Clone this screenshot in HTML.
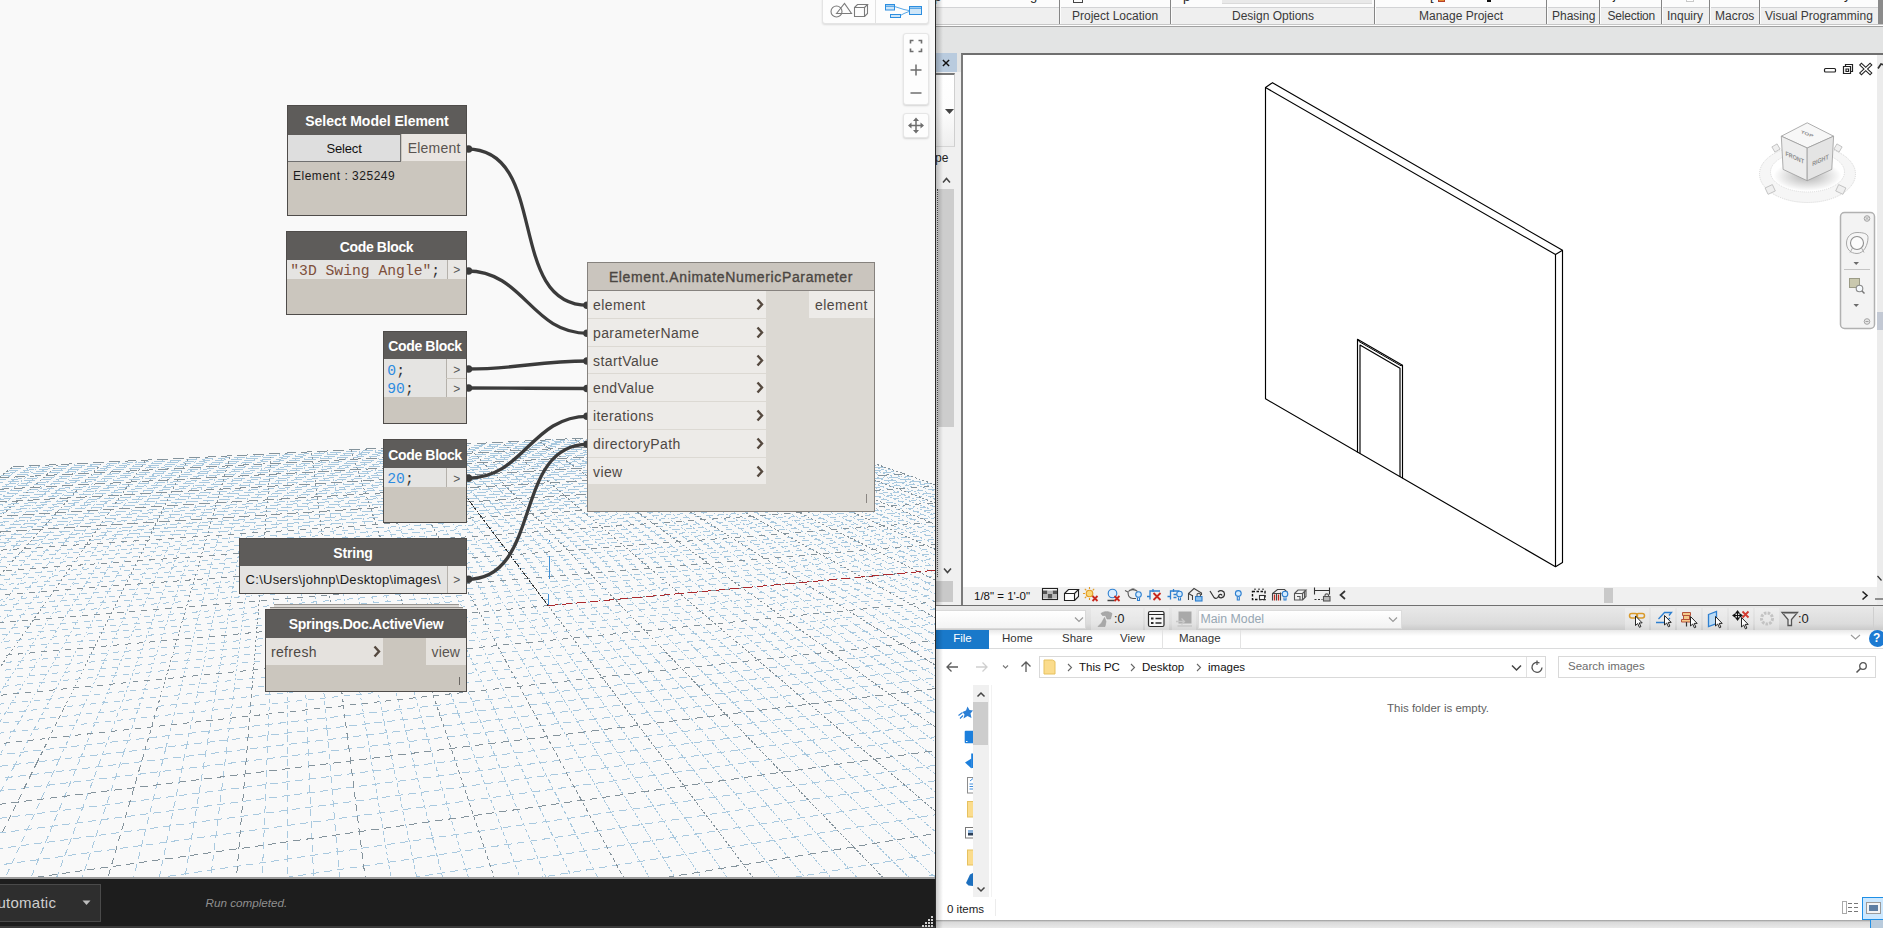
<!DOCTYPE html>
<html><head><meta charset="utf-8"><title>Dynamo - Revit</title>
<style>
*{box-sizing:border-box;margin:0;padding:0}
html,body{width:1883px;height:928px;overflow:hidden;background:#e6e6e6;font-family:"Liberation Sans",sans-serif;}
.abs{position:absolute}
#dyn{left:0;top:0;width:935px;height:878px;background:#f9f9f9;overflow:hidden}
/* nodes */
.node{position:absolute;background:#cbc6be;border:1px solid #4f4c4a;}
.hd{position:absolute;left:0;top:0;right:0;background:#5e5c5a;color:#fff;font-weight:bold;font-size:14px;text-align:center;white-space:nowrap}
.t{position:absolute;white-space:nowrap}
.code{font-family:"Liberation Mono",monospace;font-size:14.7px;margin-top:2px;margin-left:-1px}
.oport{position:absolute;letter-spacing:.3px;background:#e9e5e1;color:#595450;font-size:14px;text-align:center}
.gt{position:absolute;background:#e9e7e4;border-left:1px solid #b5b1ab;color:#555;font-size:12px;text-align:center}
.ed{position:absolute;background:#e5e4e2}
/* big node */
#big{position:absolute;left:587px;top:262px;width:288px;height:250px;background:#dcd9d3;border:1px solid #86827e}
#big .bh{position:absolute;left:0;top:0;right:0;height:28px;background:#cac5be;border-bottom:1px solid #86827e;color:#4b4642;font-size:14px;letter-spacing:.65px;-webkit-text-stroke:.35px #4b4642;text-align:center;line-height:29px;white-space:nowrap}
.ip{position:absolute;left:0;width:178px;height:26.750px;letter-spacing:.4px;background:#edebe8;color:#4d4844;font-size:14px;line-height:28px;padding-left:5px;white-space:nowrap}
.chev{position:absolute;right:2px;top:7px;width:8px;height:13px}
</style></head><body>
<div id="dyn" class="abs">
<svg class="abs" style="left:0;top:0" width="935" height="878" viewBox="0 0 935 878" shape-rendering="crispEdges">
<path d="M59964.1 -44854.2L3279.2 1299.7M-49096.1 37591.7L3131.2 1248.3M-17178.0 13462.7L2997.1 1201.7M-10321.3 8279.2L2875.1 1159.2M-5655.3 4751.9L2661.4 1084.9M-4584.0 3942.0L2567.2 1052.2M-3840.0 3379.6L2480.2 1021.9M-3293.1 2966.2L2399.6 993.9M-2543.0 2399.2L2255.0 943.6M-2274.7 2196.3L2189.9 921.0M-2052.8 2028.6L2128.9 899.8M-1866.3 1887.6L2071.8 879.9M-1570.2 1663.7L1967.5 843.6M-1450.7 1573.4L1919.7 827.1M-1345.7 1494.0L1874.7 811.4M-1252.6 1423.6L1832.0 796.5M-1095.1 1304.5L1753.2 769.2M-1027.8 1253.7L1716.8 756.5M-966.8 1207.5L1682.1 744.4M-911.1 1165.5L1649.0 732.9M-813.5 1091.7L1587.4 711.5M-770.4 1059.1L1558.7 701.5M-730.6 1029.0L1531.2 692.0M-693.6 1001.0L1504.8 682.8M-627.2 950.8L1455.3 665.6M-597.3 928.2L1432.1 657.5M-569.2 907.0L1409.7 649.7M-542.9 887.1L1388.2 642.3M-494.8 850.8L1347.6 628.1M-472.8 834.2L1328.4 621.5M-452.0 818.4L1309.9 615.0M-432.3 803.5L1292.0 608.8" stroke="#a9c9df" stroke-width="1" stroke-dasharray="8 5" fill="none"/><path d="M-396.0 776.0L1258.1 597.0M-379.1 763.3L1242.0 591.4M-363.1 751.2L1226.4 586.0M-347.8 739.6L1211.3 580.7M-319.3 718.0L1182.5 570.7M-305.9 708.0L1168.8 565.9M-293.2 698.3L1155.5 561.3M-281.0 689.1L1142.5 556.8M-258.0 671.8L1117.8 548.2M-247.3 663.6L1106.0 544.1M-236.9 655.8L1094.5 540.1M-226.9 648.2L1083.3 536.2M-208.1 634.0L1061.9 528.8M-199.1 627.2L1051.6 525.2M-190.5 620.7L1041.5 521.7M-182.2 614.5L1031.8 518.3M-166.5 602.5L1013.0 511.8M-159.0 596.9L1003.9 508.6M-151.7 591.4L995.1 505.6M-144.7 586.1L986.5 502.6M-131.3 576.0L969.9 496.8M-124.9 571.1L961.9 494.0M-118.7 566.4L954.1 491.3M-112.7 561.9L946.4 488.6" stroke="#a9c9df" stroke-width="1" stroke-dasharray="6 6" fill="none"/><path d="M-101.2 553.2L931.6 483.5M-95.7 549.0L924.5 481.0M-90.3 545.0L917.5 478.6M-85.1 541.1L910.7 476.2M-75.1 533.5L897.5 471.6M-70.3 529.9L891.0 469.4M-65.7 526.3L884.8 467.2M-61.1 522.9L878.6 465.1M-52.4 516.3L866.7 460.9M-48.1 513.1L860.9 458.9M-44.0 510.0L855.3 456.9M-40.0 507.0L849.7 455.0M-32.3 501.1L838.9 451.3M-28.5 498.3L833.7 449.4M-24.9 495.5L828.5 447.6M-21.3 492.8L823.5 445.9M-14.4 487.6L813.7 442.5M-11.1 485.1L808.9 440.8M-7.8 482.6L804.2 439.2M-4.6 480.2L799.6 437.6M1.5 475.5L790.6 434.5M4.5 473.3L786.2 432.9M7.5 471.1L782.0 431.5M10.3 468.9L777.7 430.0" stroke="#a9c9df" stroke-width="1" stroke-dasharray="11 5" fill="none"/>
<path d="M-1617.3 1745.5L-425.1 815.3M-1529.8 1724.2L-398.4 812.2M-1444.8 1703.5L-372.0 809.2M-1362.1 1683.4L-345.9 806.2M-1203.3 1644.8L-294.5 800.2M-1127.0 1626.2L-269.2 797.3M-1052.7 1608.2L-244.2 794.4M-980.3 1590.6L-219.4 791.6M-841.0 1556.7L-170.6 785.9M-774.0 1540.4L-146.6 783.2M-708.5 1524.4L-122.8 780.4M-644.7 1508.9L-99.2 777.7M-521.5 1478.9L-52.8 772.3M-462.0 1464.5L-30.0 769.7M-403.9 1450.4L-7.3 767.1M-347.2 1436.5L15.1 764.5M-237.5 1409.9L59.3 759.4M-184.4 1397.0L81.0 756.9M-132.5 1384.3L102.6 754.4M-81.7 1372.0L124.0 751.9M16.6 1348.1L166.1 747.1M64.3 1336.5L186.8 744.7M110.9 1325.1L207.4 742.3M156.6 1314.0L227.8 739.9M245.3 1292.4L268.0 735.3M288.3 1282.0L287.8 733.0M330.4 1271.7L307.4 730.8M371.8 1261.7L326.9 728.5" stroke="#a9c9df" stroke-width="1" stroke-dasharray="7 5" fill="none"/><path d="M-425.1 815.3L-339.8 748.7M-398.4 812.2L-316.7 746.3M-372.0 809.2L-293.8 744.0M-345.9 806.2L-271.1 741.6M-294.5 800.2L-226.4 737.0M-269.2 797.3L-204.4 734.7M-244.2 794.4L-182.6 732.4M-219.4 791.6L-160.9 730.2M-170.6 785.9L-118.2 725.7M-146.6 783.2L-97.2 723.5M-122.8 780.4L-76.3 721.4M-99.2 777.7L-55.6 719.2M-52.8 772.3L-14.8 715.0M-30.0 769.7L5.4 712.9M-7.3 767.1L25.4 710.8M15.1 764.5L45.2 708.7M59.3 759.4L84.2 704.7M81.0 756.9L103.5 702.7M102.6 754.4L122.7 700.7M124.0 751.9L141.6 698.7M166.1 747.1L179.1 694.8M186.8 744.7L197.6 692.9M207.4 742.3L215.9 691.0M227.8 739.9L234.1 689.1M268.0 735.3L270.0 685.4M287.8 733.0L287.7 683.5M307.4 730.8L305.3 681.7M326.9 728.5L322.8 679.9" stroke="#a9c9df" stroke-width="1" stroke-dasharray="4 4" fill="none"/><path d="M-339.8 748.7L22.2 466.3M-316.7 746.3L31.3 465.9M-293.8 744.0L40.3 465.4M-271.1 741.6L49.3 465.0M-226.4 737.0L67.2 464.1M-204.4 734.7L76.1 463.6M-182.6 732.4L85.0 463.2M-160.9 730.2L93.8 462.7M-118.2 725.7L111.3 461.8M-97.2 723.5L120.0 461.4M-76.3 721.4L128.7 461.0M-55.6 719.2L137.4 460.5M-14.8 715.0L154.6 459.7M5.4 712.9L163.1 459.2M25.4 710.8L171.6 458.8M45.2 708.7L180.1 458.4M84.2 704.7L197.0 457.5M103.5 702.7L205.4 457.1M122.7 700.7L213.7 456.7M141.6 698.7L222.1 456.3M179.1 694.8L238.6 455.4M197.6 692.9L246.8 455.0M215.9 691.0L255.0 454.6M234.1 689.1L263.2 454.2M270.0 685.4L279.4 453.4M287.7 683.5L287.5 453.0M305.3 681.7L295.6 452.6M322.8 679.9L303.6 452.2M357.2 676.3L319.5 451.4M374.3 674.5L327.4 451.0M391.1 672.8L335.3 450.6M407.9 671.0L343.2 450.2M441.0 667.6L358.8 449.4M457.4 665.9L366.6 449.0M473.6 664.2L374.4 448.6M489.7 662.5L382.1 448.2" stroke="#a9c9df" stroke-width="1" stroke-dasharray="2 2.500" fill="none"/><path d="M452.1 1242.1L365.2 724.1M491.1 1232.6L384.2 721.9M529.4 1223.3L402.9 719.7M567.0 1214.2L421.5 717.6M640.1 1196.4L458.2 713.3M675.7 1187.7L476.3 711.2M710.6 1179.2L494.3 709.2M744.9 1170.9L512.1 707.1" stroke="#a9c9df" stroke-width="1" stroke-dasharray="4 3" fill="none"/><path d="M365.2 724.1L357.2 676.3M384.2 721.9L374.3 674.5M402.9 719.7L391.1 672.8M421.5 717.6L407.9 671.0M458.2 713.3L441.0 667.6M476.3 711.2L457.4 665.9M494.3 709.2L473.6 664.2M512.1 707.1L489.7 662.5" stroke="#a9c9df" stroke-width="1" stroke-dasharray="3 3" fill="none"/><path d="M811.8 1154.6L547.2 703.1M547.2 703.1L521.5 659.2M844.3 1146.7L564.6 701.1M564.6 701.1L537.3 657.6M876.3 1138.9L581.7 699.1M581.7 699.1L552.9 656.0M907.8 1131.3L598.8 697.1M598.8 697.1L568.4 654.4M969.1 1116.4L632.4 693.2M632.4 693.2L599.0 651.2M999.0 1109.1L649.1 691.3M649.1 691.3L614.1 649.6M1028.4 1101.9L665.5 689.4M665.5 689.4L629.2 648.0M1057.4 1094.9L681.9 687.5M681.9 687.5L644.1 646.5M1113.9 1081.2L714.2 683.8M714.2 683.8L673.5 643.4M1141.4 1074.5L730.1 682.0M730.1 682.0L688.1 641.9M1168.6 1067.9L745.9 680.1M745.9 680.1L702.6 640.4M1195.3 1061.4L761.6 678.3M761.6 678.3L717.0 638.9M1247.5 1048.7L792.5 674.7M792.5 674.7L745.4 636.0M1273.0 1042.5L807.8 673.0M807.8 673.0L759.4 634.5M1298.1 1036.4L823.0 671.2M823.0 671.2L773.4 633.1M1322.8 1030.3L838.1 669.5M838.1 669.5L787.2 631.6M1371.2 1018.6L867.8 666.1M867.8 666.1L814.6 628.8M1394.8 1012.8L882.5 664.4M882.5 664.4L828.1 627.4M1418.1 1007.2L897.1 662.7M897.1 662.7L841.6 626.0M1441.1 1001.6L911.6 661.0M911.6 661.0L854.9 624.6M1486.0 990.6L940.2 657.7M940.2 657.7L881.4 621.8M1508.0 985.3L954.3 656.1M954.3 656.1L894.4 620.5M1529.7 980.0L968.3 654.4M968.3 654.4L907.4 619.1M1551.1 974.8L982.3 652.8M982.3 652.8L920.3 617.8M1592.9 964.6L1009.8 649.7M1009.8 649.7L945.8 615.1M1613.4 959.6L1023.4 648.1M1023.4 648.1L958.4 613.8M1633.7 954.7L1036.9 646.5M1036.9 646.5L971.0 612.5M1653.6 949.9L1050.3 645.0M1050.3 645.0L983.4 611.2M1692.7 940.4L1076.7 641.9M1076.7 641.9L1008.1 608.7M1711.9 935.7L1089.8 640.4M1089.8 640.4L1020.3 607.4M1730.8 931.1L1102.8 638.9M1102.8 638.9L1032.4 606.1M1749.5 926.6L1115.7 637.4M1115.7 637.4L1044.4 604.9M1786.1 917.7L1141.3 634.5M1141.3 634.5L1068.2 602.4M1804.0 913.3L1153.9 633.0M1153.9 633.0L1080.0 601.2M1821.7 909.0L1166.4 631.6M1166.4 631.6L1091.7 600.0M1839.2 904.7L1178.8 630.1M1178.8 630.1L1103.4 598.8M1873.6 896.4L1203.4 627.3M1203.4 627.3L1126.4 596.4M1890.4 892.3L1215.6 625.9M1215.6 625.9L1137.8 595.2M1907.1 888.2L1227.7 624.5M1227.7 624.5L1149.1 594.0M1923.5 884.2L1239.7 623.1M1239.7 623.1L1160.4 592.8M1955.8 876.4L1263.4 620.4M1263.4 620.4L1182.7 590.5M1971.6 872.5L1275.2 619.0M1275.2 619.0L1193.7 589.4M1987.3 868.7L1286.8 617.7M1286.8 617.7L1204.7 588.2M2002.8 864.9L1298.4 616.3M1298.4 616.3L1215.5 587.1" stroke="#a9c9df" stroke-width="1" stroke-dasharray="2.500 1.500" fill="none"/><path d="M521.5 659.2L397.5 447.5M537.3 657.6L405.1 447.1M552.9 656.0L412.7 446.7M568.4 654.4L420.3 446.3M599.0 651.2L435.4 445.5M614.1 649.6L442.9 445.2M629.2 648.0L450.4 444.8M644.1 646.5L457.8 444.4M673.5 643.4L472.6 443.7M688.1 641.9L480.0 443.3M702.6 640.4L487.3 442.9M717.0 638.9L494.6 442.6M745.4 636.0L509.2 441.8M759.4 634.5L516.4 441.5M773.4 633.1L523.6 441.1M787.2 631.6L530.8 440.7M814.6 628.8L545.1 440.0M828.1 627.4L552.2 439.7M841.6 626.0L559.3 439.3M854.9 624.6L566.4 439.0M881.4 621.8L580.4 438.3M894.4 620.5L587.4 437.9M907.4 619.1L594.4 437.6M920.3 617.8L601.3 437.2M945.8 615.1L615.1 436.5M958.4 613.8L622.0 436.2M971.0 612.5L628.8 435.8M983.4 611.2L635.6 435.5M1008.1 608.7L649.2 434.8M1020.3 607.4L655.9 434.5M1032.4 606.1L662.7 434.1M1044.4 604.9L669.4 433.8M1068.2 602.4L682.7 433.1M1080.0 601.2L689.3 432.8M1091.7 600.0L696.0 432.4M1103.4 598.8L702.5 432.1M1126.4 596.4L715.7 431.5M1137.8 595.2L722.2 431.1M1149.1 594.0L728.7 430.8M1160.4 592.8L735.2 430.5M1182.7 590.5L748.1 429.8M1193.7 589.4L754.5 429.5M1204.7 588.2L760.9 429.2M1215.5 587.1L767.2 428.9" stroke="#a9c9df" stroke-width="1" stroke-dasharray="2 2" fill="none"/>
<path d="M18887.3 -13801.5L3443.5 1356.9M-7330.6 6018.4L2763.6 1120.5M-2874.2 2649.5L2324.8 967.9M-1707.3 1767.4L2018.0 861.2M-1169.6 1360.9L1791.6 782.5M-860.2 1127.0L1617.5 722.0M-659.2 975.1L1479.6 674.0M-518.2 868.4L1367.5 635.1" stroke="#84939c" stroke-width="1" stroke-dasharray="8 5" fill="none"/><path d="M-413.7 789.4L1274.8 602.8M-333.2 728.6L1196.7 575.6M-269.3 680.3L1130.0 552.5M-217.3 641.0L1072.5 532.5M-174.2 608.4L1022.3 515.0M-137.9 580.9L978.1 499.7M-106.9 557.5L938.9 486.0" stroke="#84939c" stroke-width="1" stroke-dasharray="6 6" fill="none"/><path d="M-80.1 537.2L904.0 473.9M-56.7 519.6L872.6 463.0M-36.1 504.0L844.2 453.1M-17.8 490.2L818.5 444.2M-1.5 477.9L795.1 436.0M13.1 466.8L773.6 428.5" stroke="#84939c" stroke-width="1" stroke-dasharray="11 5" fill="none"/>
<path d="M-1707.3 1767.4L-452.0 818.4M-1281.6 1663.8L-320.1 803.2M-909.8 1573.4L-194.9 788.7M-582.3 1493.7L-75.9 775.0M-291.7 1423.1L37.3 761.9M-32.0 1359.9L145.1 749.5M201.4 1303.1L248.0 737.6M412.3 1251.8L346.1 726.3" stroke="#84939c" stroke-width="1" stroke-dasharray="7 5" fill="none"/><path d="M-452.0 818.4L-363.1 751.2M-320.1 803.2L-248.7 739.3M-194.9 788.7L-139.5 727.9M-75.9 775.0L-35.1 717.1M37.3 761.9L64.8 706.7M145.1 749.5L160.4 696.8M248.0 737.6L252.1 687.2M346.1 726.3L340.1 678.1" stroke="#84939c" stroke-width="1" stroke-dasharray="4 4" fill="none"/><path d="M-363.1 751.2L13.1 466.8M-248.7 739.3L58.3 464.5M-139.5 727.9L102.6 462.3M-35.1 717.1L146.0 460.1M64.8 706.7L188.6 458.0M160.4 696.8L230.3 455.9M252.1 687.2L271.3 453.8M340.1 678.1L311.6 451.8M424.5 669.3L351.0 449.8M505.7 660.9L389.8 447.8" stroke="#84939c" stroke-width="1" stroke-dasharray="2 2.500" fill="none"/><path d="M603.9 1205.2L440.0 715.4M778.7 1162.7L529.7 705.1" stroke="#84939c" stroke-width="1" stroke-dasharray="4 3" fill="none"/><path d="M440.0 715.4L424.5 669.3M529.7 705.1L505.7 660.9" stroke="#84939c" stroke-width="1" stroke-dasharray="3 3" fill="none"/><path d="M938.7 1123.8L615.7 695.2M615.7 695.2L583.7 652.8M1085.9 1088.0L698.1 685.6M698.1 685.6L658.9 645.0M1221.6 1055.0L777.1 676.5M777.1 676.5L731.2 637.4M1347.2 1024.4L853.0 667.8M853.0 667.8L801.0 630.2M1463.7 996.1L925.9 659.3M925.9 659.3L868.2 623.2M1572.1 969.7L996.1 651.2M996.1 651.2L933.1 616.5M1673.3 945.1L1063.5 643.5M1063.5 643.5L995.8 609.9M1767.9 922.1L1128.5 636.0M1128.5 636.0L1056.4 603.6M1856.5 900.5L1191.2 628.7M1191.2 628.7L1114.9 597.6M1939.7 880.3L1251.6 621.7M1251.6 621.7L1171.5 591.7M2018.0 861.2L1309.9 615.0M1309.9 615.0L1226.4 586.0" stroke="#84939c" stroke-width="1" stroke-dasharray="2.500 1.500" fill="none"/><path d="M583.7 652.8L427.9 445.9M658.9 645.0L465.2 444.0M731.2 637.4L501.9 442.2M801.0 630.2L538.0 440.4M868.2 623.2L573.4 438.6M933.1 616.5L608.2 436.9M995.8 609.9L642.4 435.1M1056.4 603.6L676.1 433.4M1114.9 597.6L709.1 431.8M1171.5 591.7L741.6 430.2M1226.4 586.0L773.6 428.5" stroke="#84939c" stroke-width="1" stroke-dasharray="2 2" fill="none"/>
<path d="M548.2 605.6L1130.0 552.5" stroke="#ab2a2e" stroke-width="1" stroke-dasharray="10 4" fill="none"/>
<path d="M548.2 605.6L467.8 499.0" stroke="#333" stroke-width="1" stroke-dasharray="2 1" fill="none"/>
<path d="M549.5 540V541.500M549.5 556V579M548.5 594V605" stroke="#3f8fd6" stroke-width="1" fill="none"/>
</svg>
<svg class="abs" style="left:0;top:0" width="935" height="878" viewBox="0 0 935 878"><g fill="none" stroke="#3b3b3b" stroke-width="3.300"><path d="M467 149C550.0 149 505.0 305.3 588 305.3"/><path d="M467 271C524.2 271 530.8 333.3 588 333.3"/><path d="M467 369C517.9 369 537.1 361 588 361"/><path d="M467 388C517.8 388 537.2 388.5 588 388.5"/><path d="M467 478.3C524.1 478.3 530.9 416.3 588 416.3"/><path d="M467 579.3C543.1 579.3 511.9 444.3 588 444.3"/></g><g fill="#3b3b3b"><circle cx="468.5" cy="149" r="3.800"/><circle cx="587" cy="305.3" r="3.800"/><circle cx="468.5" cy="271" r="3.800"/><circle cx="587" cy="333.3" r="3.800"/><circle cx="468.5" cy="369" r="3.800"/><circle cx="587" cy="361" r="3.800"/><circle cx="468.5" cy="388" r="3.800"/><circle cx="587" cy="388.5" r="3.800"/><circle cx="468.5" cy="478.3" r="3.800"/><circle cx="587" cy="416.3" r="3.800"/><circle cx="468.5" cy="579.3" r="3.800"/><circle cx="587" cy="444.3" r="3.800"/></g></svg>
<div class="node" style="left:287px;top:105px;width:180px;height:110.600px">
 <div class="hd" style="height:28.4px;line-height:31.90px;letter-spacing:-0.02px">Select Model Element</div>
 <div class="abs" style="left:0;top:28.400px;width:113.200px;height:27.700px;background:#dedede;border:1px solid #6f6f6f;border-left:0;border-top-color:#5e5c5a;color:#111;font-size:13px;letter-spacing:-.19px;text-align:center;line-height:27.500px">Select</div>
 <div class="oport" style="left:113.800px;top:28px;width:64.700px;height:26.700px;line-height:28.500px;letter-spacing:.19px">Element</div>
 <div class="t" style="left:5px;top:63.200px;font-size:12px;letter-spacing:.51px;color:#1a1a1a">Element : 325249</div>
</div>
<div class="node" style="left:286px;top:231px;width:181px;height:83.500px">
 <div class="hd" style="height:28.1px;line-height:31.70px;letter-spacing:-0.35px">Code Block</div>
 <div class="ed" style="left:0;top:28.100px;width:159.500px;height:18.600px"></div>
 <div class="t code" style="left:4.300px;top:28.400px;color:#7d4f3b;line-height:18px">"3D Swing Angle"<span style="color:#333">;</span></div>
 <div class="gt" style="left:159.500px;top:28.100px;width:19.500px;height:18.600px;line-height:21.500px">&gt;</div>
</div>
<div class="node" style="left:383px;top:331px;width:84px;height:92.700px">
 <div class="hd" style="height:26.9px;line-height:28.70px;letter-spacing:-0.35px">Code Block</div>
 <div class="ed" style="left:0;top:26.900px;width:62.300px;height:38px"></div>
 <div class="t code" style="left:4.300px;top:27.500px;color:#2e8be0;line-height:18px">0<span style="color:#333">;</span></div>
 <div class="t code" style="left:4.300px;top:46.400px;color:#2e8be0;line-height:18px">90<span style="color:#333">;</span></div>
 <div class="gt" style="left:62.300px;top:26.900px;width:19.700px;height:19.400px;line-height:22px">&gt;</div>
 <div class="gt" style="left:62.300px;top:46.600px;width:19.700px;height:18.300px;line-height:21px">&gt;</div>
</div>
<div class="node" style="left:383px;top:439px;width:84px;height:83.500px">
 <div class="hd" style="height:27.5px;line-height:31.50px;letter-spacing:-0.35px">Code Block</div>
 <div class="ed" style="left:0;top:27.500px;width:62.300px;height:19.300px"></div>
 <div class="t code" style="left:4.300px;top:28.100px;color:#2e8be0;line-height:18px">20<span style="color:#333">;</span></div>
 <div class="gt" style="left:62.300px;top:27.500px;width:19.700px;height:19.300px;line-height:22px">&gt;</div>
</div>
<div class="node" style="left:239px;top:538px;width:228px;height:55.700px">
 <div class="hd" style="height:27.2px;line-height:29.90px;letter-spacing:-0.17px">String</div>
 <div class="ed" style="left:0;top:27.200px;width:206.500px;height:26.500px;background:#e4e3e1"></div>
 <div class="t" style="left:5.600px;top:33.300px;font-size:13px;letter-spacing:.3px;color:#1a1a1a">C:\Users\johnp\Desktop\images\</div>
 <div class="gt" style="left:206.500px;top:27.200px;width:19.500px;height:26.500px;line-height:28px">&gt;</div>
</div>
<div class="abs" style="left:273.500px;top:604px;width:185.500px;height:4px;background:#dcd9d5;border-top:1px solid #9a9692"></div>
<div class="abs" style="left:269.500px;top:606.500px;width:193px;height:3px;background:#d2cec8;border-top:1px solid #8f8b87"></div>
<div class="node" style="left:265px;top:609px;width:202px;height:83.200px">
 <div class="hd" style="height:27.7px;line-height:28.10px;letter-spacing:-0.24px">Springs.Doc.ActiveView</div>
 <div class="ip" style="top:28px;width:117.200px;height:27.200px;background:#e5e2de;letter-spacing:.32px">refresh<svg class="chev" viewBox="0 0 8 13"><path d="M1.500 1.500L6 6.500L1.500 11.500" fill="none" stroke="#55493f" stroke-width="2.400"/></svg></div>
 <div class="oport" style="left:159.600px;top:28px;width:40.400px;height:27.200px;line-height:28px;background:#e5e2de;letter-spacing:.1px">view</div>
 <div class="abs" style="left:193.300px;top:66.500px;width:1px;height:8.500px;background:#6a6662"></div>
</div>
<div id="big">
 <div class="bh">Element.AnimateNumericParameter</div>
 <div class="ip" style="top:28.00px">element<svg class="chev" viewBox="0 0 8 13"><path d="M1.500 1.500L6 6.500L1.500 11.500" fill="none" stroke="#55493f" stroke-width="2.400"/></svg></div>
 <div class="ip" style="top:55.75px">parameterName<svg class="chev" viewBox="0 0 8 13"><path d="M1.500 1.500L6 6.500L1.500 11.500" fill="none" stroke="#55493f" stroke-width="2.400"/></svg></div>
 <div class="ip" style="top:83.50px">startValue<svg class="chev" viewBox="0 0 8 13"><path d="M1.500 1.500L6 6.500L1.500 11.500" fill="none" stroke="#55493f" stroke-width="2.400"/></svg></div>
 <div class="ip" style="top:111.25px">endValue<svg class="chev" viewBox="0 0 8 13"><path d="M1.500 1.500L6 6.500L1.500 11.500" fill="none" stroke="#55493f" stroke-width="2.400"/></svg></div>
 <div class="ip" style="top:139.00px">iterations<svg class="chev" viewBox="0 0 8 13"><path d="M1.500 1.500L6 6.500L1.500 11.500" fill="none" stroke="#55493f" stroke-width="2.400"/></svg></div>
 <div class="ip" style="top:166.75px">directoryPath<svg class="chev" viewBox="0 0 8 13"><path d="M1.500 1.500L6 6.500L1.500 11.500" fill="none" stroke="#55493f" stroke-width="2.400"/></svg></div>
 <div class="ip" style="top:194.50px">view<svg class="chev" viewBox="0 0 8 13"><path d="M1.500 1.500L6 6.500L1.500 11.500" fill="none" stroke="#55493f" stroke-width="2.400"/></svg></div>
 <div class="oport" style="left:221px;top:28px;width:65px;height:26.600px;line-height:28px;background:#edebe8;color:#4d4844;letter-spacing:.43px">element</div>
 <div class="abs" style="left:278px;top:231px;width:1px;height:9px;background:#8a8682"></div>
</div>
<!-- top-right view toggle -->
<div class="abs" style="left:822px;top:-4px;width:107px;height:28px;background:#fdfdfd;border:1px solid #e4e4e4;border-radius:3px;box-shadow:0 1px 2px rgba(0,0,0,.12)"></div>
<div class="abs" style="left:875px;top:0;width:1px;height:23px;background:#e2e2e2"></div>
<svg class="abs" style="left:828px;top:1px" width="42" height="18" viewBox="0 0 42 18"><g fill="none" stroke="#7b7b7b" stroke-width="1.1"><circle cx="8.5" cy="10.5" r="5.5"/><path d="M8.5 12.5L16.5 2.5L23.5 12.5Z"/><path d="M26.5 6.5H36.5V15.5H26.5ZM26.500 6.5L29.5 3.500H39.500L36.5 6.500M39.500 3.500V12.500L36.500 15.500"/></g></svg>
<svg class="abs" style="left:884px;top:3px" width="40" height="16" viewBox="0 0 40 16"><g fill="#cfe6f8" stroke="#2c8ee0" stroke-width="1"><path d="M10.5 3.500L20.000 6.500L25.000 7.500M15.500 13.000L20.000 10.500L25.000 8.500" fill="none" stroke="#5aa9e8"/><rect x="1.500" y="1.500" width="9" height="5.500"/><path d="M1.500 3.200H10.500" /><rect x="6.500" y="11.500" width="10" height="3"/><rect x="25.500" y="3.500" width="12" height="8"/><path d="M25.500 5.200H37.500"/></g></svg>
<!-- zoom controls -->
<div class="abs" style="left:903px;top:33px;width:26px;height:72px;background:#fdfdfd;border:1px solid #e6e6e6;border-radius:3px;box-shadow:0 1px 2px rgba(0,0,0,.15)"></div>
<svg class="abs" style="left:903px;top:33px" width="26" height="72" viewBox="0 0 26 72"><g fill="none" stroke="#6e6e6e" stroke-width="1.6"><path d="M7.500 10.500V7.500H10.500M15.500 7.500H18.500V10.500M18.500 15.500V18.500H15.500M10.500 18.500H7.500V15.500"/><path d="M7.500 37H18.500M13 31.500V42.500" stroke-width="1.500"/><path d="M7.500 60H18.500" stroke-width="1.500"/></g></svg>
<div class="abs" style="left:903px;top:113px;width:26px;height:25px;background:#fdfdfd;border:1px solid #e6e6e6;border-radius:3px;box-shadow:0 1px 2px rgba(0,0,0,.15)"></div>
<svg class="abs" style="left:903px;top:113px" width="26" height="25" viewBox="0 0 26 25"><g fill="none" stroke="#6e6e6e" stroke-width="1.500"><path d="M13 6V19M6.500 12.500H19.500"/></g><g fill="#6e6e6e"><path d="M13 4.500L10 8H16ZM13 20.500L10 17H16ZM5 12.500L8.500 9.500V15.500ZM21 12.500L17.500 9.500V15.500Z"/></g></svg>

</div>
<div class="abs" style="left:0;top:877px;width:935px;height:51px;background:#1d1d1d;border-top:2px solid #9b9b9b;border-bottom:2px solid #3a3a3a"></div>
<div class="abs" style="left:-2px;top:884px;width:103px;height:38px;background:#2e2e2e;border:1px solid #4a4a4a"></div>
<div class="abs t" style="left:-2.500px;top:894.200px;font-size:15px;color:#cfcfcf;letter-spacing:.25px">utomatic</div>
<svg class="abs" style="left:82px;top:900px" width="10" height="6" viewBox="0 0 10 6"><path d="M0.500 0.500H8.500L4.500 5Z" fill="#bdbdbd"/></svg>
<div class="abs t" style="left:205.500px;top:896.400px;font-size:11.700px;font-style:italic;color:#8f8f8f">Run completed.</div>
<svg class="abs" style="left:922px;top:915px" width="12" height="12" viewBox="0 0 12 12"><g fill="#d0d0d0"><rect x="9" y="1" width="2" height="2"/><rect x="6" y="4" width="2" height="2"/><rect x="9" y="4" width="2" height="2"/><rect x="3" y="7" width="2" height="2"/><rect x="6" y="7" width="2" height="2"/><rect x="9" y="7" width="2" height="2"/><rect x="0" y="10" width="2" height="2"/><rect x="3" y="10" width="2" height="2"/><rect x="6" y="10" width="2" height="2"/><rect x="9" y="10" width="2" height="2"/></g></svg>
<div class="abs" style="left:935px;top:0;width:1px;height:928px;background:#2b2b2b"></div>

<div id="rv" class="abs" style="left:936px;top:0;width:947px;height:631px;background:#e3e4e4;overflow:hidden;font-size:12px;color:#3a3a3a">
<!-- ribbon strip (coords relative to x=936) -->
<div class="abs" style="left:0;top:0;width:947px;height:27px;background:#efefef;border-bottom:1px solid #a0a0a0"></div><div class="abs" style="left:0;top:24px;width:947px;height:2px;background:#fdfdfd;border-top:1px solid #c6c6c6"></div>
<div class="abs" style="left:0;top:0;width:947px;height:8px;background:#fcfcfc;border-bottom:1px solid #d2d3d5"></div>
<div class="abs" style="left:286px;top:0;width:150px;height:4px;background:#e9e9e9;border-bottom:1px solid #dadada"></div>
<!-- separators -->
<div class="abs" style="left:123px;top:0;width:2px;height:24px;background:#fcfcfc;border-left:1px solid #858585"></div>
<div class="abs" style="left:234px;top:0;width:2px;height:24px;background:#fcfcfc;border-left:1px solid #858585"></div>
<div class="abs" style="left:438px;top:0;width:2px;height:24px;background:#fcfcfc;border-left:1px solid #858585"></div>
<div class="abs" style="left:610px;top:0;width:2px;height:24px;background:#fcfcfc;border-left:1px solid #858585"></div>
<div class="abs" style="left:663px;top:0;width:2px;height:24px;background:#fcfcfc;border-left:1px solid #858585"></div>
<div class="abs" style="left:725px;top:0;width:2px;height:24px;background:#fcfcfc;border-left:1px solid #858585"></div>
<div class="abs" style="left:773px;top:0;width:2px;height:24px;background:#fcfcfc;border-left:1px solid #858585"></div>
<div class="abs" style="left:823px;top:0;width:2px;height:24px;background:#fcfcfc;border-left:1px solid #858585"></div>
<div class="abs" style="left:942px;top:0;width:5px;height:24px;background:#8b8b8b"></div>
<!-- labels -->
<div class="t" style="left:136px;top:9px">Project Location</div>
<div class="t" style="left:296px;top:9px">Design Options</div>
<div class="t" style="left:483px;top:9px">Manage Project</div>
<div class="t" style="left:616px;top:9px">Phasing</div>
<div class="t" style="left:671.500px;top:9px;letter-spacing:-.2px">Selection</div>
<div class="t" style="left:731px;top:9px">Inquiry</div>
<div class="t" style="left:779px;top:9px">Macros</div>
<div class="t" style="left:829px;top:9px">Visual Programming</div>
<!-- clipped glyph fragments at the very top -->
<div class="t" style="left:-2px;top:-11px;font-size:13px;color:#222">p</div>
<div class="t" style="left:94px;top:-12px;font-size:13px;color:#222">g</div>
<div class="t" style="left:247px;top:-11px;font-size:13px;color:#222">p</div>
<div class="t" style="left:908px;top:-13px;font-size:13px;color:#222">y</div>
<div class="abs" style="left:137px;top:-6px;width:10px;height:9px;border:1px solid #444"></div>
<div class="t" style="left:494px;top:-12px;font-size:13px;color:#222">[</div>
<div class="abs" style="left:502px;top:-3px;width:7px;height:5px;background:#e58a2e;border:1px solid #b5402a"></div>
<div class="abs" style="left:551px;top:0;width:4px;height:1.500px;background:#111"></div>
<div class="t" style="left:677px;top:-13px;font-size:13px;color:#222">j</div>
<div class="abs" style="left:750px;top:-4px;width:8px;height:6px;border:1px solid #c9c9c9;background:#fff"></div>
<!-- left mini panel -->
<div class="abs" style="left:0;top:53px;width:21px;height:19px;background:#b9cbde"></div>
<svg class="abs" style="left:6.200px;top:58.500px" width="8" height="8" viewBox="0 0 9 9"><path d="M1 1L8 8M8 1L1 8" stroke="#111" stroke-width="1.600" fill="none"/></svg>
<div class="abs" style="left:0;top:72px;width:26px;height:534px;background:#f0f0f0"></div>
<div class="abs" style="left:0;top:73px;width:19px;height:74px;background:linear-gradient(#fff,#fdfdfd 50%,#eeeeee);border-top:2px solid #777;border-right:1px solid #cfcfcf;border-bottom:1px solid #d5d5d5"></div>
<svg class="abs" style="left:9px;top:109px" width="9" height="5" viewBox="0 0 9 5"><path d="M0 0H9L4.500 5Z" fill="#444"/></svg>
<div class="t" style="left:-1px;top:151px;font-size:12px;color:#222">pe</div>
<svg class="abs" style="left:6px;top:177px" width="9" height="7" viewBox="0 0 9 7"><path d="M1 5.500L4.500 1.500L8 5.500" stroke="#444" stroke-width="1.500" fill="none"/></svg>
<div class="abs" style="left:2px;top:189px;width:16px;height:238px;background:#cdcdcd"></div><div class="abs" style="left:1px;top:189px;width:1px;height:388px;border-left:1px dotted #555"></div>
<svg class="abs" style="left:7px;top:567px" width="9" height="7" viewBox="0 0 9 7"><path d="M1 1.500L4.500 5.500L8 1.500" stroke="#444" stroke-width="1.500" fill="none"/></svg>
<div class="abs" style="left:0;top:581px;width:17px;height:21px;background:#c9c9c9"></div>
<div class="abs" style="left:0;top:0;width:7px;height:631px;background:linear-gradient(90deg,rgba(0,0,0,.22),rgba(0,0,0,0))"></div>
<!-- view window -->
<div class="abs" style="left:25px;top:53px;width:916px;height:552px;background:#fff;border-left:2px solid #7a7a7a;border-top:2px solid #6f6f6f"></div>
<div class="abs" style="left:941px;top:55px;width:6px;height:550px;background:#ececec"></div><div class="abs" style="left:941px;top:53px;width:6px;height:2px;background:#6f6f6f"></div>
<svg class="abs" style="left:27px;top:55px" width="914" height="532" viewBox="963 55 914 532">
<g fill="none" stroke="#000" stroke-width="1.150" stroke-linejoin="round">
<path d="M1265.500 87.500L1272.500 82.700L1562.500 250.300L1562.500 562.600L1555.500 566.700L1265.500 398.800Z"/>
<path d="M1265.500 87.500L1555.500 254.600L1562.500 250.300M1555.500 254.600V566.700"/>
<path d="M1357.500 452.500V339.200L1402.500 365.300V478.300"/>
<path d="M1360 453.500V345L1400 368.300V477"/>
<path d="M1357.500 339.200L1359 341.500L1401 365.800L1402.500 365.300" stroke-width="1"/>
</g>
<!-- window buttons -->
<g fill="none" stroke="#222" stroke-width="1.200">
<rect x="1824.500" y="68.500" width="11" height="3.500" rx="1"/>
<path d="M1843.500 66.500H1850.500V73.500H1843.500ZM1845.500 66.500V64.500H1852.500V71.500H1850.500M1846 69H1848.500V71.500H1846Z"/>
<path d="M1861.500 65L1870 73M1870 65L1861.500 73" stroke-width="3.600" stroke="#222" stroke-linecap="square"/><path d="M1861.500 65L1870 73M1870 65L1861.500 73" stroke-width="1.500" stroke="#fff" stroke-linecap="square"/>
</g>
<!-- view cube -->
<defs><radialGradient id="vs" cx=".5" cy=".5" r=".5"><stop offset="0" stop-color="#000" stop-opacity=".3"/><stop offset="1" stop-color="#000" stop-opacity="0"/></radialGradient></defs>
<ellipse cx="1807.500" cy="174" rx="48" ry="28.500" fill="#f6f6f6" stroke="#d6d6d6" stroke-dasharray="1 1"/>
<ellipse cx="1807.500" cy="172" rx="37" ry="20" fill="#fff" stroke="#dcdcdc" stroke-dasharray="1 1"/>
<ellipse cx="1807.500" cy="176" rx="34" ry="15" fill="url(#vs)"/>
<path d="M1807.200 122.800L1833.600 136.200L1807.200 148L1781.300 136.200Z" fill="#f7f7f7" stroke="#9a9a9a" stroke-width=".8"/>
<path d="M1781.300 136.200L1807.200 148V180.700L1783.100 169.400Z" fill="#ededed" stroke="#9a9a9a" stroke-width=".8"/>
<path d="M1833.600 136.200L1807.200 148V180.700L1831.800 169.400Z" fill="#e4e4e4" stroke="#9a9a9a" stroke-width=".8"/>
<g font-family="Liberation Sans,sans-serif" font-size="6.500" fill="#8f8f8f" font-weight="bold">
<text transform="matrix(1 .456 0 1 1785.500 155.600)" textLength="18.500" lengthAdjust="spacingAndGlyphs">FRONT</text>
<text transform="matrix(1 -.447 0 1 1812.200 166.200)" textLength="16.500" lengthAdjust="spacingAndGlyphs">RIGHT</text>
<text transform="translate(1800.500 133) rotate(20) scale(1 .6)">TOP</text>
</g>
<g fill="#efefef" stroke="#bdbdbd" stroke-width=".8"><rect x="1773" y="145" width="6" height="6" transform="rotate(-30 1776 148)"/><rect x="1835" y="145" width="6" height="6" transform="rotate(30 1838 148)"/><rect x="1766" y="186" width="8" height="7" transform="rotate(-25 1770 189)"/><rect x="1837" y="186" width="8" height="7" transform="rotate(25 1841 189)"/></g>
<!-- nav bar -->
<rect x="1840.500" y="212.500" width="34" height="116" rx="4" fill="#f3f3f3" stroke="#b1b1b1" stroke-width="1.500"/>
<circle cx="1867" cy="218.500" r="2.800" fill="#e6e6e6" stroke="#a5a5a5"/><path d="M1865.500 217L1868.500 220M1868.500 217L1865.500 220" stroke="#a5a5a5" stroke-width=".8"/>
<circle cx="1867" cy="321.500" r="2.800" fill="#e6e6e6" stroke="#a5a5a5"/><path d="M1865.500 321.500H1868.500" stroke="#999" stroke-width=".9"/>
<path d="M1857 232.500c6 0 11 1 11 5c0 7 -4 16 -11 16c-7 0 -10.500 -5 -10.500 -10.500c0 -6 4.500 -10.500 10.500 -10.500Z" fill="#f6f6f6" stroke="#a9a9a9"/>
<circle cx="1857" cy="243" r="6.500" fill="#fcfcfc" stroke="#8f8f8f" stroke-width="1.100"/>
<path d="M1852.500 248L1850 252.500M1861.500 248L1864 252.500" stroke="#aaa"/>
<path d="M1853.500 262H1859L1856.200 265Z" fill="#6b6b6b"/>
<path d="M1844 269.500H1870" stroke="#c4c4c4"/>
<rect x="1849.500" y="278.500" width="10" height="9" fill="#c9c8ae" stroke="#9b9b86"/>
<circle cx="1859.500" cy="288.500" r="3.300" fill="#f4f8fb" stroke="#8a8a8a" stroke-width="1.100"/><path d="M1862 291L1864.500 293.500" stroke="#777" stroke-width="1.400"/>
<path d="M1853.500 304H1859L1856.200 307Z" fill="#6b6b6b"/>
</svg>
<!-- right strip scroll thumb -->
<div class="abs" style="left:941px;top:312px;width:6px;height:18px;background:#c3c9d4"></div>
<svg class="abs" style="left:939px;top:62px" width="8" height="8" viewBox="0 0 8 8"><path d="M3 6.500L6 2L9 3" fill="none" stroke="#333" stroke-width="1.700"/></svg>

<!-- view control bar -->
<div class="abs" style="left:27px;top:587px;width:914px;height:18px;background:#f0f0f0"></div>
<div class="t" style="left:38px;top:589.500px;font-size:11.500px;color:#111">1/8" = 1'-0"</div>
<svg class="abs" style="left:100px;top:586px" width="320" height="19" viewBox="1036 586 320 19">
<g fill="none" stroke="#222" stroke-width="1.100">
<!-- 1 detail level -->
<rect x="1042.500" y="588.500" width="15" height="11" fill="#fff"/>
<path d="M1043 590.500h4.500v3.500h-4.500zM1052.500 590.500h4.500v3.500h-4.500zM1047.500 594h5v4.500h-5z" fill="#555" stroke="none"/>
<path d="M1047.500 590.500h5v3.500h-5zM1043 594h4.500v4.500h-4.500zM1052.500 594h4.500v4.500h-4.500z" fill="#b9b9b9" stroke="none"/>
<!-- 2 visual style -->
<path d="M1064.500 593.500h10v7h-10zM1064.500 593.500l4-4h10l-4 4M1078.500 589.500v7l-4 4" fill="#fff"/>
<!-- 3 sun -->
<circle cx="1089.500" cy="593.500" r="3.300" fill="#f9d77a" stroke="#e39a20"/>
<path d="M1089.500 587v2M1089.500 598v2M1083 593.500h2M1084.800 588.800l1.500 1.500M1094.200 588.800l-1.500 1.500M1084.800 598.200l1.500 -1.500" stroke="#e39a20"/>
<path d="M1092.500 596l5 5M1097.500 596l-5 5" stroke="#c8281e" stroke-width="1.800"/>
<!-- 4 shadows -->
<circle cx="1112.500" cy="593.500" r="4.300" fill="#dbeeff" stroke="#2d7fd0"/>
<path d="M1107.500 600.500h7" stroke="#444" stroke-width="1.500"/>
<path d="M1114.500 596l5 5M1119.500 596l-5 5" stroke="#c8281e" stroke-width="1.800"/>
<!-- 5 teapot -->
<path d="M1125 590.500l3 1.500c0 4 2 6.500 5 6.500h3M1128.500 591.500c1.500 -2.500 7 -2.500 9 0M1131.500 589h3" stroke="#555"/>
<circle cx="1138.500" cy="594.500" r="2.800" fill="#d4ecff" stroke="#2d7fd0"/><path d="M1137.500 598v2.500h2v-2.500" stroke="#2d7fd0"/>
<!-- 6 crop x -->
<path d="M1147 596.500h3v-5.500h10M1150 599.500v-3M1153 589v3" stroke="#2d7fd0" stroke-width="1.300"/>
<path d="M1153.500 593l7 7M1160.500 593l-7 7" stroke="#c8281e" stroke-width="1.800"/>
<!-- 7 show crop -->
<path d="M1167.500 596.500h3v-5.500h9M1170.500 599.500v-3M1173.500 589v3M1173.500 594.500h3M1173.500 597.500h3" stroke="#2d7fd0" stroke-width="1.300"/>
<circle cx="1179.500" cy="594" r="2.800" fill="#d4ecff" stroke="#2d7fd0"/><path d="M1178.500 597.500v2.500h2v-2.500" stroke="#2d7fd0"/>
<!-- 8 house lock -->
<path d="M1188.500 600v-6.500l5.500 -5l7.500 4.500v2M1192.500 600v-5M1188.500 593.500l3.500 2" stroke="#444"/>
<rect x="1195.500" y="596.500" width="6.500" height="4.500" fill="#8cc3f0" stroke="#2d7fd0"/><path d="M1197 596.500v-2c0 -1.500 3.500 -1.500 3.500 0v2" stroke="#555"/>
<!-- 9 glasses -->
<path d="M1210 591l4 6.500c1.500 1.500 4 1 4.500 -1.500c1 -2 3 -2 3.500 -.5M1218.500 596c1 3 6 2 6 -2c0 -3 -4 -4.500 -6.500 -2" stroke="#333" stroke-width="1.200"/>
<!-- 10 bulb -->
<circle cx="1238.300" cy="593.500" r="2.900" fill="#d4ecff" stroke="#2d7fd0"/><path d="M1237.300 597v3h2v-3" stroke="#2d7fd0"/>
<!-- 11 temp view props -->
<path d="M1252.500 591.500h12.500v8h-12.500z" stroke-dasharray="2.500 1.500" stroke="#111" stroke-width="1.400"/><path d="M1255 590v-1.500M1259 590v-1.500M1263 590v-1.500" stroke="#111"/>
<rect x="1259.500" y="595.500" width="5" height="4" fill="#fff" stroke="#333"/>
<!-- 12 analytical -->
<path d="M1272.500 600.500v-7l5 -4h7l3 3M1276.500 600.500v-7.500M1280.500 600.500v-8M1272.500 593.500h9" stroke="#444"/>
<path d="M1274.500 600.500v-6M1278.500 600.500v-6" stroke="#c8281e" stroke-width="1.300"/>
<circle cx="1285" cy="594" r="2.800" fill="#d4ecff" stroke="#2d7fd0"/><path d="M1284 597.500v2.500h2v-2.500" stroke="#2d7fd0"/>
<!-- 13 highlight displacement -->
<path d="M1294.500 593.500h8v6.500h-8zM1294.500 593.500l3.500 -3.500h8l-3.500 3.500M1306 590v6.500l-3.500 3.500M1297 596.500h3v3.500M1304.500 591.500v7" stroke="#555"/>
<!-- 14 reveal constraints -->
<path d="M1314.500 587.500v7M1329.500 587.500v7M1314.500 590.500h15" stroke="#333"/><path d="M1314.500 599.500h8" stroke="#333" stroke-dasharray="2 1.500"/>
<rect x="1323.500" y="596.500" width="6.500" height="4.500" fill="#bbb" stroke="#555"/><path d="M1325 596.500v-1.500c0 -1.500 3.500 -1.500 3.500 0v1.500" stroke="#555"/>
<!-- 15 < -->
<path d="M1345 591l-4.500 4l4.500 4" stroke="#333" stroke-width="1.700"/>
</g></svg>
<!-- horizontal scrollbar of view -->
<div class="abs" style="left:668px;top:588px;width:9px;height:15px;background:#c9c9c9"></div>
<svg class="abs" style="left:925px;top:590px" width="8" height="11" viewBox="0 0 8 11"><path d="M1.500 1.500L6 5.500L1.500 9.500" stroke="#222" stroke-width="1.600" fill="none"/></svg>
<svg class="abs" style="left:939px;top:573px" width="8" height="30" viewBox="0 0 8 30"><path d="M2.500 3l4 4.500M0 26h8" stroke="#333" stroke-width="1.200" fill="none"/></svg>

<div class="abs" style="left:0;top:604.500px;width:947px;height:1.500px;background:#707070"></div>
<!-- status bar -->
<div class="abs" style="left:0;top:606px;width:947px;height:25px;background:linear-gradient(#e9e9e9,#dcdcdc 70%,#c8c8c8)"></div>
<div class="abs" style="left:0;top:610px;width:150px;height:19px;background:linear-gradient(#ffffff,#f3f3f3);border:1px solid #d9d9d9;border-left:0"></div>
<svg class="abs" style="left:138px;top:616px" width="10" height="7" viewBox="0 0 10 7"><path d="M1 1.500L5 5.500L9 1.500" stroke="#9a9a9a" stroke-width="1.200" fill="none"/></svg>
<div class="abs" style="left:155px;top:608px;width:52px;height:22px;background:rgba(255,255,255,.28)"></div>
<svg class="abs" style="left:160px;top:610px" width="18" height="18" viewBox="0 0 18 18"><path d="M5 3.500c3 -2.500 8 -2.500 11 0l-1.500 5.500h-3.500l-1.500 -3.500l-3 0zM8.500 7.500l-3 5.500l-3.500 3.500h7l1 -5z" fill="#a8a8a8" stroke="#9a9a9a" stroke-width=".6"/></svg>
<div class="t" style="left:178px;top:611.500px;font-size:12.500px;color:#222">:0</div>
<div class="abs" style="left:209px;top:608px;width:24px;height:22px;background:rgba(255,255,255,.28)"></div>
<svg class="abs" style="left:211px;top:610px" width="19" height="18" viewBox="0 0 19 18"><rect x="1.500" y="1.500" width="15.500" height="15" rx="1.500" fill="#f8f8f8" stroke="#2a2a2a" stroke-width="1.200"/><path d="M1.500 4.500h15.500" stroke="#2a2a2a"/><path d="M4 7.500h2.500v2h-2.500zM4 12h2.500v2h-2.500z" fill="#2a2a2a"/><path d="M8.500 8.500h6M8.500 13h6" stroke="#2a2a2a" stroke-width="1.300"/></svg>
<div class="abs" style="left:236px;top:608px;width:24px;height:22px;background:rgba(255,255,255,.22)"></div>
<svg class="abs" style="left:238px;top:610px" width="20" height="18" viewBox="0 0 20 18"><rect x="4.500" y="1.500" width="13" height="12" fill="#a9a9a9"/><path d="M2 11.500h8M7.500 8.500l3 3l-3 3M3.500 16h14.500" fill="none" stroke="#c8c8c8" stroke-width="1.300"/></svg>
<div class="abs" style="left:262px;top:610px;width:204px;height:19px;background:linear-gradient(#ffffff,#f2f2f2);border:1px solid #dcdcdc"></div>
<div class="t" style="left:264.500px;top:611.500px;font-size:12.300px;color:#97a7b3">Main Model</div>
<svg class="abs" style="left:452px;top:616px" width="10" height="7" viewBox="0 0 10 7"><path d="M1 1.500L5 5.500L9 1.500" stroke="#9a9a9a" stroke-width="1.200" fill="none"/></svg>
<!-- right icons -->
<div class="abs" style="left:689px;top:608px;width:24px;height:22px;background:rgba(255,255,255,.28)"></div>
<div class="abs" style="left:715px;top:608px;width:24px;height:22px;background:rgba(255,255,255,.28)"></div>
<div class="abs" style="left:741px;top:608px;width:24px;height:22px;background:rgba(255,255,255,.28)"></div>
<div class="abs" style="left:767px;top:608px;width:24px;height:22px;background:rgba(255,255,255,.28)"></div>
<div class="abs" style="left:793px;top:608px;width:24px;height:22px;background:rgba(255,255,255,.28)"></div>
<div class="abs" style="left:819px;top:608px;width:24px;height:22px;background:rgba(255,255,255,.28)"></div>
<div class="abs" style="left:937px;top:607px;width:1px;height:23px;background:#cfcfcf"></div>
<svg class="abs" style="left:689px;top:606px" width="190" height="25" viewBox="1625 606 190 25">

<g fill="none">
<!-- link -->
<rect x="1629.500" y="613.500" width="8" height="4.500" rx="2.200" stroke="#d99a2b" stroke-width="1.500"/><rect x="1636.500" y="613.500" width="8" height="4.500" rx="2.200" stroke="#d99a2b" stroke-width="1.500"/>
<path transform="translate(1635.500 616)" d="M0 0v9.500l2.200 -2l1.700 3.800l1.500 -.7l-1.700 -3.700h3z" fill="#fff" stroke="#111" stroke-width=".9"/>
<!-- underlay -->
<path d="M1656 622.500h9l5 -4.500M1658.500 619l6 -6.500h7l-2.500 3" stroke="#2d7fd0" stroke-width="1.300"/>
<path transform="translate(1664.500 615.500)" d="M0 0v9.500l2.200 -2l1.700 3.800l1.500 -.7l-1.700 -3.700h3z" fill="#fff" stroke="#111" stroke-width=".9"/>
<!-- pin -->
<path d="M1682.500 612.500h8v3h-8zM1683.500 615.500h6v4h-6zM1681.500 619.500h10v2.500h-10z" fill="#f4c98a" stroke="#b5523a" stroke-width="1"/><path d="M1686.500 622v4.500" stroke="#333" stroke-width="1.200"/>
<path transform="translate(1690.500 616.500)" d="M0 0v9.500l2.200 -2l1.700 3.800l1.500 -.7l-1.700 -3.700h3z" fill="#fff" stroke="#111" stroke-width=".9"/>
<!-- face -->
<path d="M1708.500 614.500l8 -3v12l-8 3z" fill="#bcdcf6" stroke="#2d7fd0" stroke-width="1.300"/>
<path transform="translate(1715.500 616.500)" d="M0 0v9.500l2.200 -2l1.700 3.800l1.500 -.7l-1.700 -3.700h3z" fill="#fff" stroke="#111" stroke-width=".9"/>
<!-- drag -->
<path d="M1733 615.500h9M1737.500 611v9M1733 615.500l2 -1.500v3zM1742 615.500l-2 -1.500v3zM1737.500 611l-1.500 2h3zM1737.500 620l-1.500 -2h3z" stroke="#111" stroke-width="1.100"/>
<path d="M1742.500 611.500l6 6M1748.500 611.500l-6 6" stroke="#d23a30" stroke-width="1.800"/>
<path transform="translate(1741.500 617.500)" d="M0 0v9.500l2.200 -2l1.700 3.800l1.500 -.7l-1.700 -3.700h3z" fill="#fff" stroke="#111" stroke-width=".9"/>
<!-- spinner -->
<circle cx="1767" cy="618.500" r="5.500" stroke="#c3c3c3" stroke-width="3" stroke-dasharray="2.500 1.200"/>
<!-- funnel -->
<path d="M1782 612.500h15.500l-6 7v6h-3.500v-6z" fill="#e8e8e8" stroke="#555" stroke-width="1.300"/><path d="M1783 613.500h13.500" stroke="#999"/>
</g></svg>
<div class="t" style="left:862px;top:611px;font-size:13px;color:#222">:0</div>


</div>

<div id="ex" class="abs" style="left:936px;top:630px;width:947px;height:290px;background:#fff;overflow:hidden;font-size:11.500px;color:#333">
<!-- tab row -->
<div class="abs" style="left:0;top:0;width:947px;height:19px;background:linear-gradient(#e9e9e9,#fff 6px);border-bottom:1px solid #dadbdc"></div>
<div class="abs" style="left:0;top:0;width:53px;height:19px;background:#1979ca;color:#fff;text-align:center;line-height:17px">File</div>
<div class="t" style="left:66px;top:1.700px">Home</div>
<div class="t" style="left:126px;top:1.700px">Share</div>
<div class="t" style="left:184px;top:1.700px">View</div>
<div class="abs" style="left:226px;top:0;width:1px;height:19px;background:#e3e3e3"></div>
<div class="t" style="left:243px;top:1.700px">Manage</div>
<div class="abs" style="left:304px;top:0;width:1px;height:19px;background:#e3e3e3"></div>
<svg class="abs" style="left:914px;top:4px" width="11" height="7" viewBox="0 0 11 7"><path d="M1 1L5.500 5L10 1" fill="none" stroke="#9a9a9a" stroke-width="1.100"/></svg>
<div class="abs" style="left:933px;top:0;width:17px;height:17px;border-radius:9px;background:#1c7ad2;color:#fff;font-weight:bold;font-size:12px;line-height:17px;padding-left:4px">?</div>
<!-- nav row -->
<svg class="abs" style="left:8px;top:30px" width="100" height="14" viewBox="0 0 100 14"><g fill="none" stroke="#5b5b5b" stroke-width="1.300"><path d="M14 7H3M7.500 2.500L3 7L7.500 11.500"/><path d="M32 7H43M38.500 2.500L43 7L38.500 11.500" stroke="#cfcfcf"/><path d="M59 5.500L61.500 8L64 5.500" stroke="#777" stroke-width="1.100"/><path d="M82 12V2M77.500 6.500L82 2L86.500 6.500"/></g></svg>
<div class="abs" style="left:103px;top:26px;width:507px;height:22px;border:1px solid #d9d9d9;background:#fff"></div>
<svg class="abs" style="left:107px;top:29px" width="14" height="16" viewBox="0 0 14 16"><path d="M1 1h8.500l2.500 1.500v12.500h-11z" fill="#fbdc8c" stroke="#e6c15f"/></svg>
<svg class="abs" style="left:131px;top:33px" width="6" height="9" viewBox="0 0 6 9"><path d="M1 1L4.500 4.500L1 8" fill="none" stroke="#666" stroke-width="1.100"/></svg>
<div class="t" style="left:143px;top:30.600px;color:#111">This PC</div>
<svg class="abs" style="left:194px;top:33px" width="6" height="9" viewBox="0 0 6 9"><path d="M1 1L4.500 4.500L1 8" fill="none" stroke="#666" stroke-width="1.100"/></svg>
<div class="t" style="left:206px;top:30.600px;color:#111">Desktop</div>
<svg class="abs" style="left:260px;top:33px" width="6" height="9" viewBox="0 0 6 9"><path d="M1 1L4.500 4.500L1 8" fill="none" stroke="#666" stroke-width="1.100"/></svg>
<div class="t" style="left:272px;top:30.600px;color:#111">images</div>
<svg class="abs" style="left:575px;top:34px" width="11" height="8" viewBox="0 0 11 8"><path d="M1 1.500L5.500 6L10 1.500" fill="none" stroke="#444" stroke-width="1.500"/></svg>
<div class="abs" style="left:590px;top:27px;width:1px;height:20px;background:#e1e1e1"></div>
<svg class="abs" style="left:594px;top:30px" width="14" height="14" viewBox="0 0 14 14"><path d="M9.500 3A5 5 0 1 0 12 7.500" fill="none" stroke="#555" stroke-width="1.300"/><path d="M7 .5V5" stroke="#555" stroke-width="1.300"/></svg>
<div class="abs" style="left:622px;top:26px;width:318px;height:22px;border:1px solid #d9d9d9;background:#fff"></div>
<div class="t" style="left:632px;top:30px;color:#6d6d6d">Search images</div>
<svg class="abs" style="left:919px;top:31px" width="13" height="13" viewBox="0 0 13 13"><circle cx="8" cy="5" r="3.300" fill="none" stroke="#555" stroke-width="1.300"/><path d="M5.500 7.500L1.500 11.500" stroke="#555" stroke-width="1.600"/></svg>
<!-- nav pane icons -->
<svg class="abs" style="left:20px;top:70px" width="17" height="190" viewBox="0 0 17 190">
<path d="M6.500 12L10 10.500L11.500 6.500L13.500 10L17 10.500L14.500 13.500L15.500 18L11.500 16L7.500 18.500L8.500 14.500Z" fill="#2a7fd6"/><path d="M2.500 15.500L6.500 12.500M4 18.500L7 15.500" stroke="#2a7fd6" stroke-width="1.100"/>
<rect x="8.700" y="30.700" width="9" height="12.500" rx="1" fill="#1c7fdc"/><rect x="10" y="41" width="1.500" height="1" fill="#fff"/>
<path d="M9 62.500L15.500 58.500V68.500Z" fill="#1c7fdc"/><rect x="15.200" y="53.500" width="1.800" height="14.500" fill="#1c7fdc"/>
<rect x="11.500" y="77.500" width="8" height="15.500" fill="#fff" stroke="#8c8c8c"/><path d="M14 81l3 -2.500M13.500 84h4M13.500 86.500h4M13.500 89h4" stroke="#2a7fd6" stroke-width=".9"/>
<rect x="11.500" y="101.500" width="8" height="15.500" fill="#fbdc8c" stroke="#e6c15f"/>
<rect x="9.500" y="127.500" width="9" height="10.500" fill="#fff" stroke="#777"/><rect x="12" y="130" width="6" height="3" fill="#8db4dc"/><rect x="12" y="133" width="6" height="2.500" fill="#2c3e55"/>
<rect x="11.500" y="150" width="8" height="15" fill="#fbdc8c" stroke="#e6c15f"/>
<path d="M10 183L14 174.500L17 173V186L12.500 185.500Z" fill="#1c6fbe"/>
</svg>
<!-- scrollbar -->
<div class="abs" style="left:37px;top:55px;width:16px;height:212px;background:#f0f0f0"></div>
<div class="abs" style="left:37px;top:72px;width:15px;height:43px;background:#cdcdcd"></div>
<svg class="abs" style="left:40px;top:60.500px" width="10" height="7" viewBox="0 0 10 7"><path d="M1.500 5.500L5 2L8.500 5.500" fill="none" stroke="#444" stroke-width="1.500"/></svg>
<svg class="abs" style="left:40px;top:255.500px" width="10" height="7" viewBox="0 0 10 7"><path d="M1.500 1.500L5 5L8.500 1.500" fill="none" stroke="#444" stroke-width="1.500"/></svg>
<div class="abs" style="left:55px;top:55px;width:1px;height:212px;background:#f2f2f2"></div>
<div class="t" style="left:451px;top:71.500px;color:#5f5f5f">This folder is empty.</div>
<!-- status -->
<div class="t" style="left:11px;top:273px;color:#222">0 items</div>
<div class="abs" style="left:59px;top:269px;width:1px;height:17px;background:#ececec"></div>
<svg class="abs" style="left:906px;top:271px" width="18" height="14" viewBox="0 0 18 14"><g fill="none" stroke="#777"><rect x=".5" y=".5" width="4" height="12" stroke="#aaa"/><path d="M6 2.500h4M12 2.500h4M6 6.500h4M12 6.500h4M6 10.500h4M12 10.500h4" stroke-width="1.100"/></g></svg>
<div class="abs" style="left:926px;top:267px;width:23px;height:23px;background:#cce8ff;border:1px solid #1e8fe6"></div>
<div class="abs" style="left:931px;top:273px;width:13px;height:10px;background:#5d7ea3;border:2px solid #f4f4f4;outline:1px solid #9a9a9a"></div>
</div>
<!-- strip below explorer -->
<div class="abs" style="left:936px;top:920px;width:947px;height:8px;background:linear-gradient(#9a9a9a,#d9d9d9 2px,#e9e9e9)"></div>
<div class="abs" style="left:1870px;top:920px;width:13px;height:8px;background:#b9cbdc;border-left:1px solid #1e8fe6"></div>
<div class="abs" style="left:936px;top:630px;width:7px;height:298px;background:linear-gradient(90deg,rgba(0,0,0,.2),rgba(0,0,0,0))"></div>

</body></html>
